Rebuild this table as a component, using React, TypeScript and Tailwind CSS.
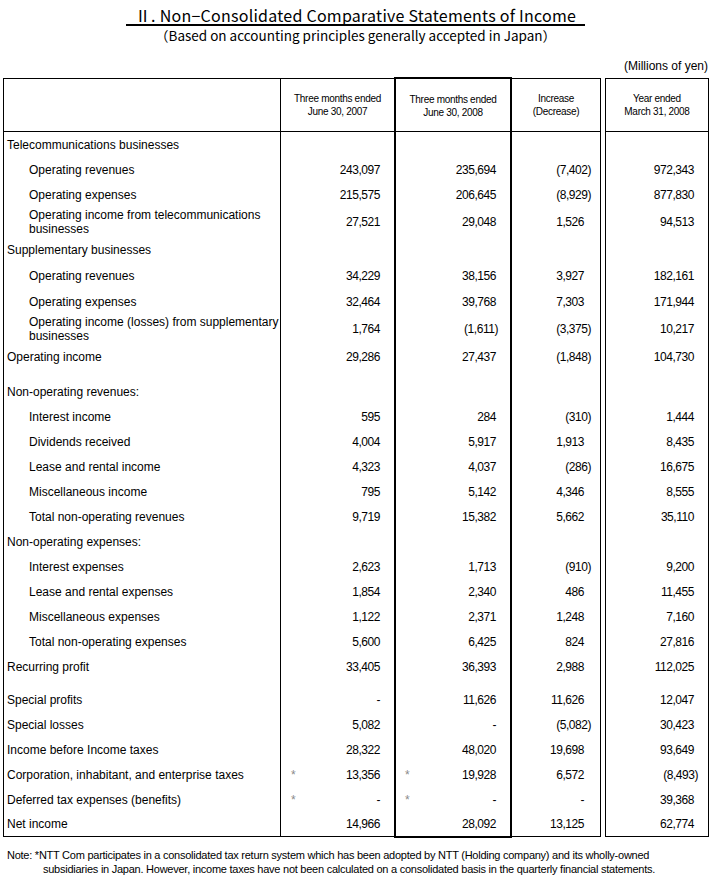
import React from 'react';

type Line = {
  label: string[];
  sub?: boolean;
  v?: [string, string, string, string];
  h: string;
  star?: boolean;
  spacer?: string;
};

const lines: Line[] = [
  { label: ['Telecommunications businesses'], h: 'h-[25px]' },
  { label: ['Operating revenues'], sub: true, v: ['243,097', '235,694', '(7,402)', '972,343'], h: 'h-[25px]' },
  { label: ['Operating expenses'], sub: true, v: ['215,575', '206,645', '(8,929)', '877,830'], h: 'h-[25px]' },
  { label: ['Operating income from telecommunications', 'businesses'], sub: true, v: ['27,521', '29,048', '1,526', '94,513'], h: 'h-[30px]' },
  { label: ['Supplementary businesses'], h: 'h-[26px]' },
  { label: ['Operating revenues'], sub: true, v: ['34,229', '38,156', '3,927', '182,161'], h: 'h-[26px]' },
  { label: ['Operating expenses'], sub: true, v: ['32,464', '39,768', '7,303', '171,944'], h: 'h-[25px]' },
  { label: ['Operating income (losses) from supplementary', 'businesses'], sub: true, v: ['1,764', '(1,611)', '(3,375)', '10,217'], h: 'h-[30px]' },
  { label: ['Operating income'], v: ['29,286', '27,437', '(1,848)', '104,730'], h: 'h-[26px]' },
  { label: ['Non-operating revenues:'], h: 'h-[25px]', spacer: 'h-[9px]' },
  { label: ['Interest income'], sub: true, v: ['595', '284', '(310)', '1,444'], h: 'h-[25px]' },
  { label: ['Dividends received'], sub: true, v: ['4,004', '5,917', '1,913', '8,435'], h: 'h-[25px]' },
  { label: ['Lease and rental income'], sub: true, v: ['4,323', '4,037', '(286)', '16,675'], h: 'h-[25px]' },
  { label: ['Miscellaneous income'], sub: true, v: ['795', '5,142', '4,346', '8,555'], h: 'h-[25px]' },
  { label: ['Total non-operating revenues'], sub: true, v: ['9,719', '15,382', '5,662', '35,110'], h: 'h-[25px]' },
  { label: ['Non-operating expenses:'], h: 'h-[25px]' },
  { label: ['Interest expenses'], sub: true, v: ['2,623', '1,713', '(910)', '9,200'], h: 'h-[25px]' },
  { label: ['Lease and rental expenses'], sub: true, v: ['1,854', '2,340', '486', '11,455'], h: 'h-[25px]' },
  { label: ['Miscellaneous expenses'], sub: true, v: ['1,122', '2,371', '1,248', '7,160'], h: 'h-[25px]' },
  { label: ['Total non-operating expenses'], sub: true, v: ['5,600', '6,425', '824', '27,816'], h: 'h-[25px]' },
  { label: ['Recurring profit'], v: ['33,405', '36,393', '2,988', '112,025'], h: 'h-[25px]' },
  { label: ['Special profits'], v: ['-', '11,626', '11,626', '12,047'], h: 'h-[25px]', spacer: 'h-[8px]' },
  { label: ['Special losses'], v: ['5,082', '-', '(5,082)', '30,423'], h: 'h-[25px]' },
  { label: ['Income before Income taxes'], v: ['28,322', '48,020', '19,698', '93,649'], h: 'h-[25px]' },
  { label: ['Corporation, inhabitant, and enterprise taxes'], v: ['13,356', '19,928', '6,572', '(8,493)'], h: 'h-[25px]', star: true },
  { label: ['Deferred tax expenses (benefits)'], v: ['-', '-', '-', '39,368'], h: 'h-[25px]', star: true },
  { label: ['Net income'], v: ['14,966', '28,092', '13,125', '62,774'], h: 'h-[25px]' },
];

const neg = (s: string) => s.startsWith('(');

function Cells({ l, last }: { l?: Line; last?: boolean }) {
  const v = l?.v;
  const b = last ? 'border-b' : '';
  return (
    <>
      <div className={`w-[277px] h-full border-l border-black flex flex-col justify-center ${b} ${l?.sub ? 'pl-[25px]' : 'pl-[3px]'}`}>
        {l?.label.map((t) => (
          <div key={t} className="text-[12px] leading-[14px] whitespace-nowrap">{t}</div>
        ))}
      </div>
      <div className={`w-[114px] h-full border-l border-black flex items-center justify-between pl-[10px] pr-[14px] text-[12px] tracking-[-0.45px] ${b}`}>
        <span className="text-[#8a8a8a]">{l?.star ? '*' : ''}</span>
        <span>{v?.[0]}</span>
      </div>
      <div className={`w-[118px] border-x-2 border-black flex items-center justify-between pl-[9px] text-[12px] tracking-[-0.45px] ${last ? 'border-b-2 h-[calc(100%+1px)] self-start' : 'h-full'} ${v && neg(v[1]) ? 'pr-[12px]' : 'pr-[14px]'}`}>
        <span className="text-[#8a8a8a]">{l?.star ? '*' : ''}</span>
        <span>{v?.[1]}</span>
      </div>
      <div className={`w-[89px] h-full border-r border-black flex items-center justify-end text-[12px] tracking-[-0.45px] ${b} ${v && neg(v[2]) ? 'pr-[9px]' : 'pr-[16px]'}`}>
        {v?.[2]}
      </div>
      <div className="w-[4px] h-full" />
      <div className={`w-[104px] h-full border-x border-black flex items-center justify-end text-[12px] tracking-[-0.45px] ${b} ${v && neg(v[3]) ? 'pr-[10px]' : 'pr-[14px]'}`}>
        {v?.[3]}
      </div>
    </>
  );
}

export default function App() {
  return (
    <div className="w-[711px] h-[878px] bg-white text-black font-['Liberation_Sans',Arial,sans-serif]">
      <div className="font-['Noto_Sans_CJK_JP',sans-serif]">
        <div className="flex justify-center pt-[6px]">
          <div className="border-b-2 border-black px-[9px] text-[16px] leading-[18px] tracking-[0.25px] whitespace-nowrap">
            Ⅱ. Non−Consolidated Comparative Statements of Income
          </div>
        </div>
        <div className="mt-[2px] text-center text-[13.5px] leading-[14px]">（Based on accounting principles generally accepted in Japan）</div>
      </div>

      <div className="mt-[17px] flex justify-end pr-[3px] text-[12px] leading-[14px]">(Millions of yen)</div>

      <div className="ml-[3px] mt-[4px]">
        <div className="flex items-end h-[55px] text-[10px] leading-[13px] tracking-[-0.3px] text-center">
          <div className="w-[277px] h-[54px] border border-r-0 border-black" />
          <div className="w-[114px] h-[54px] border-t border-b border-l border-black flex flex-col justify-center">
            <div>Three months ended</div>
            <div>June 30, 2007</div>
          </div>
          <div className="w-[118px] h-[55px] border-t-2 border-x-2 border-b border-black flex flex-col justify-center pt-px">
            <div>Three months ended</div>
            <div>June 30, 2008</div>
          </div>
          <div className="w-[89px] h-[54px] border-t border-b border-r border-black flex flex-col justify-center">
            <div>Increase</div>
            <div>(Decrease)</div>
          </div>
          <div className="w-[4px]" />
          <div className="w-[104px] h-[54px] border border-black flex flex-col justify-center">
            <div>Year ended</div>
            <div>March 31, 2008</div>
          </div>
        </div>

        {lines.map((l, i) => (
          <React.Fragment key={i}>
            {l.spacer && (
              <div className={`flex ${l.spacer}`}>
                <Cells />
              </div>
            )}
            <div className={`flex items-start ${l.h}`}>
              <Cells l={l} last={i === lines.length - 1} />
            </div>
          </React.Fragment>
        ))}
      </div>

      <div className="mt-[11px] pl-[43px] -indent-[36px] text-[11px] leading-[14px] tracking-[-0.25px] whitespace-nowrap">
        Note: *NTT Com participates in a consolidated tax return system which has been adopted by NTT (Holding company) and its wholly-owned
        <br />
        subsidiaries in Japan. However, income taxes have not been calculated on a consolidated basis in the quarterly financial statements.
      </div>
    </div>
  );
}
